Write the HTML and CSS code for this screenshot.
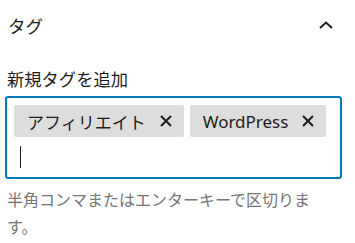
FILE: index.html
```html
<!DOCTYPE html>
<html lang="ja">
<head>
    <meta charset="UTF-8">
    <meta name="viewport" content="width=device-width, initial-scale=1.0">
    <title>タグ</title>
    <link rel="stylesheet" href="styles.css">
</head>
<body>
    <div class="panel">
        <div class="panel-header">
            <h2 class="panel-title">タグ</h2>
            <svg class="chevron" width="14" height="8" viewBox="0 0 14 8">
                <polyline points="1,7 7,1.5 13,7" fill="none" stroke="#1e1e1e" stroke-width="2"/>
            </svg>
        </div>

        <label class="field-label" for="newTag">新規タグを追加</label>
        <div class="token-field">
            <span class="token">
                <span class="token-text">アフィリエイト</span>
                <svg class="token-remove" width="12" height="12" viewBox="0 0 12 12">
                    <path d="M1 1 L11 11 M11 1 L1 11" stroke="#1e1e1e" stroke-width="2"/>
                </svg>
            </span>
            <span class="token">
                <span class="token-text">WordPress</span>
                <svg class="token-remove" width="12" height="12" viewBox="0 0 12 12">
                    <path d="M1 1 L11 11 M11 1 L1 11" stroke="#1e1e1e" stroke-width="2"/>
                </svg>
            </span>
            <div class="token-input" id="newTag"><span class="caret"></span></div>
        </div>
        <p class="help">半角コンマまたはエンターキーで区切ります。</p>
    </div>
</body>
</html>
```

FILE: styles.css
```css
body {
    margin: 0;
    background: #fff;
    color: #1e1e1e;
    font-family: "Noto Sans", "Noto Sans CJK JP", sans-serif;
}
.panel {
    padding: 0 13px 0 5px;
}
.panel-header {
    height: 50px;
    display: flex;
    align-items: center;
    justify-content: space-between;
    padding-left: 3px;
    padding-right: 9px;
}
.panel-title {
    margin: 0;
    font-size: 17.5px;
    font-weight: normal;
}
.chevron {
    display: block;
}
.field-label {
    display: block;
    margin-top: 18px;
    margin-bottom: 4px;
    padding-left: 2px;
    font-size: 17.3px;
    line-height: 24px;
}
.token-field {
    display: flex;
    flex-wrap: wrap;
    gap: 4px 6px;
    border: 2px solid #007cba;
    border-radius: 3px;
    padding: 7px 7px 4px;
}
.token {
    display: flex;
    align-items: center;
    height: 32px;
    padding: 0 12px 0 13px;
    background: #ddd;
    border-radius: 2px;
    font-size: 17px;
}
.token-remove {
    margin-left: 14px;
    display: block;
}
.token-input {
    width: 100%;
    height: 32px;
    display: flex;
    align-items: center;
    padding-left: 6px;
}
.caret {
    width: 1px;
    height: 22px;
    background: #1e1e1e;
}
.help {
    margin: 8px 0 0;
    padding-left: 2px;
    width: 312px;
    color: #757575;
    font-size: 16px;
    line-height: 27px;
}
```
